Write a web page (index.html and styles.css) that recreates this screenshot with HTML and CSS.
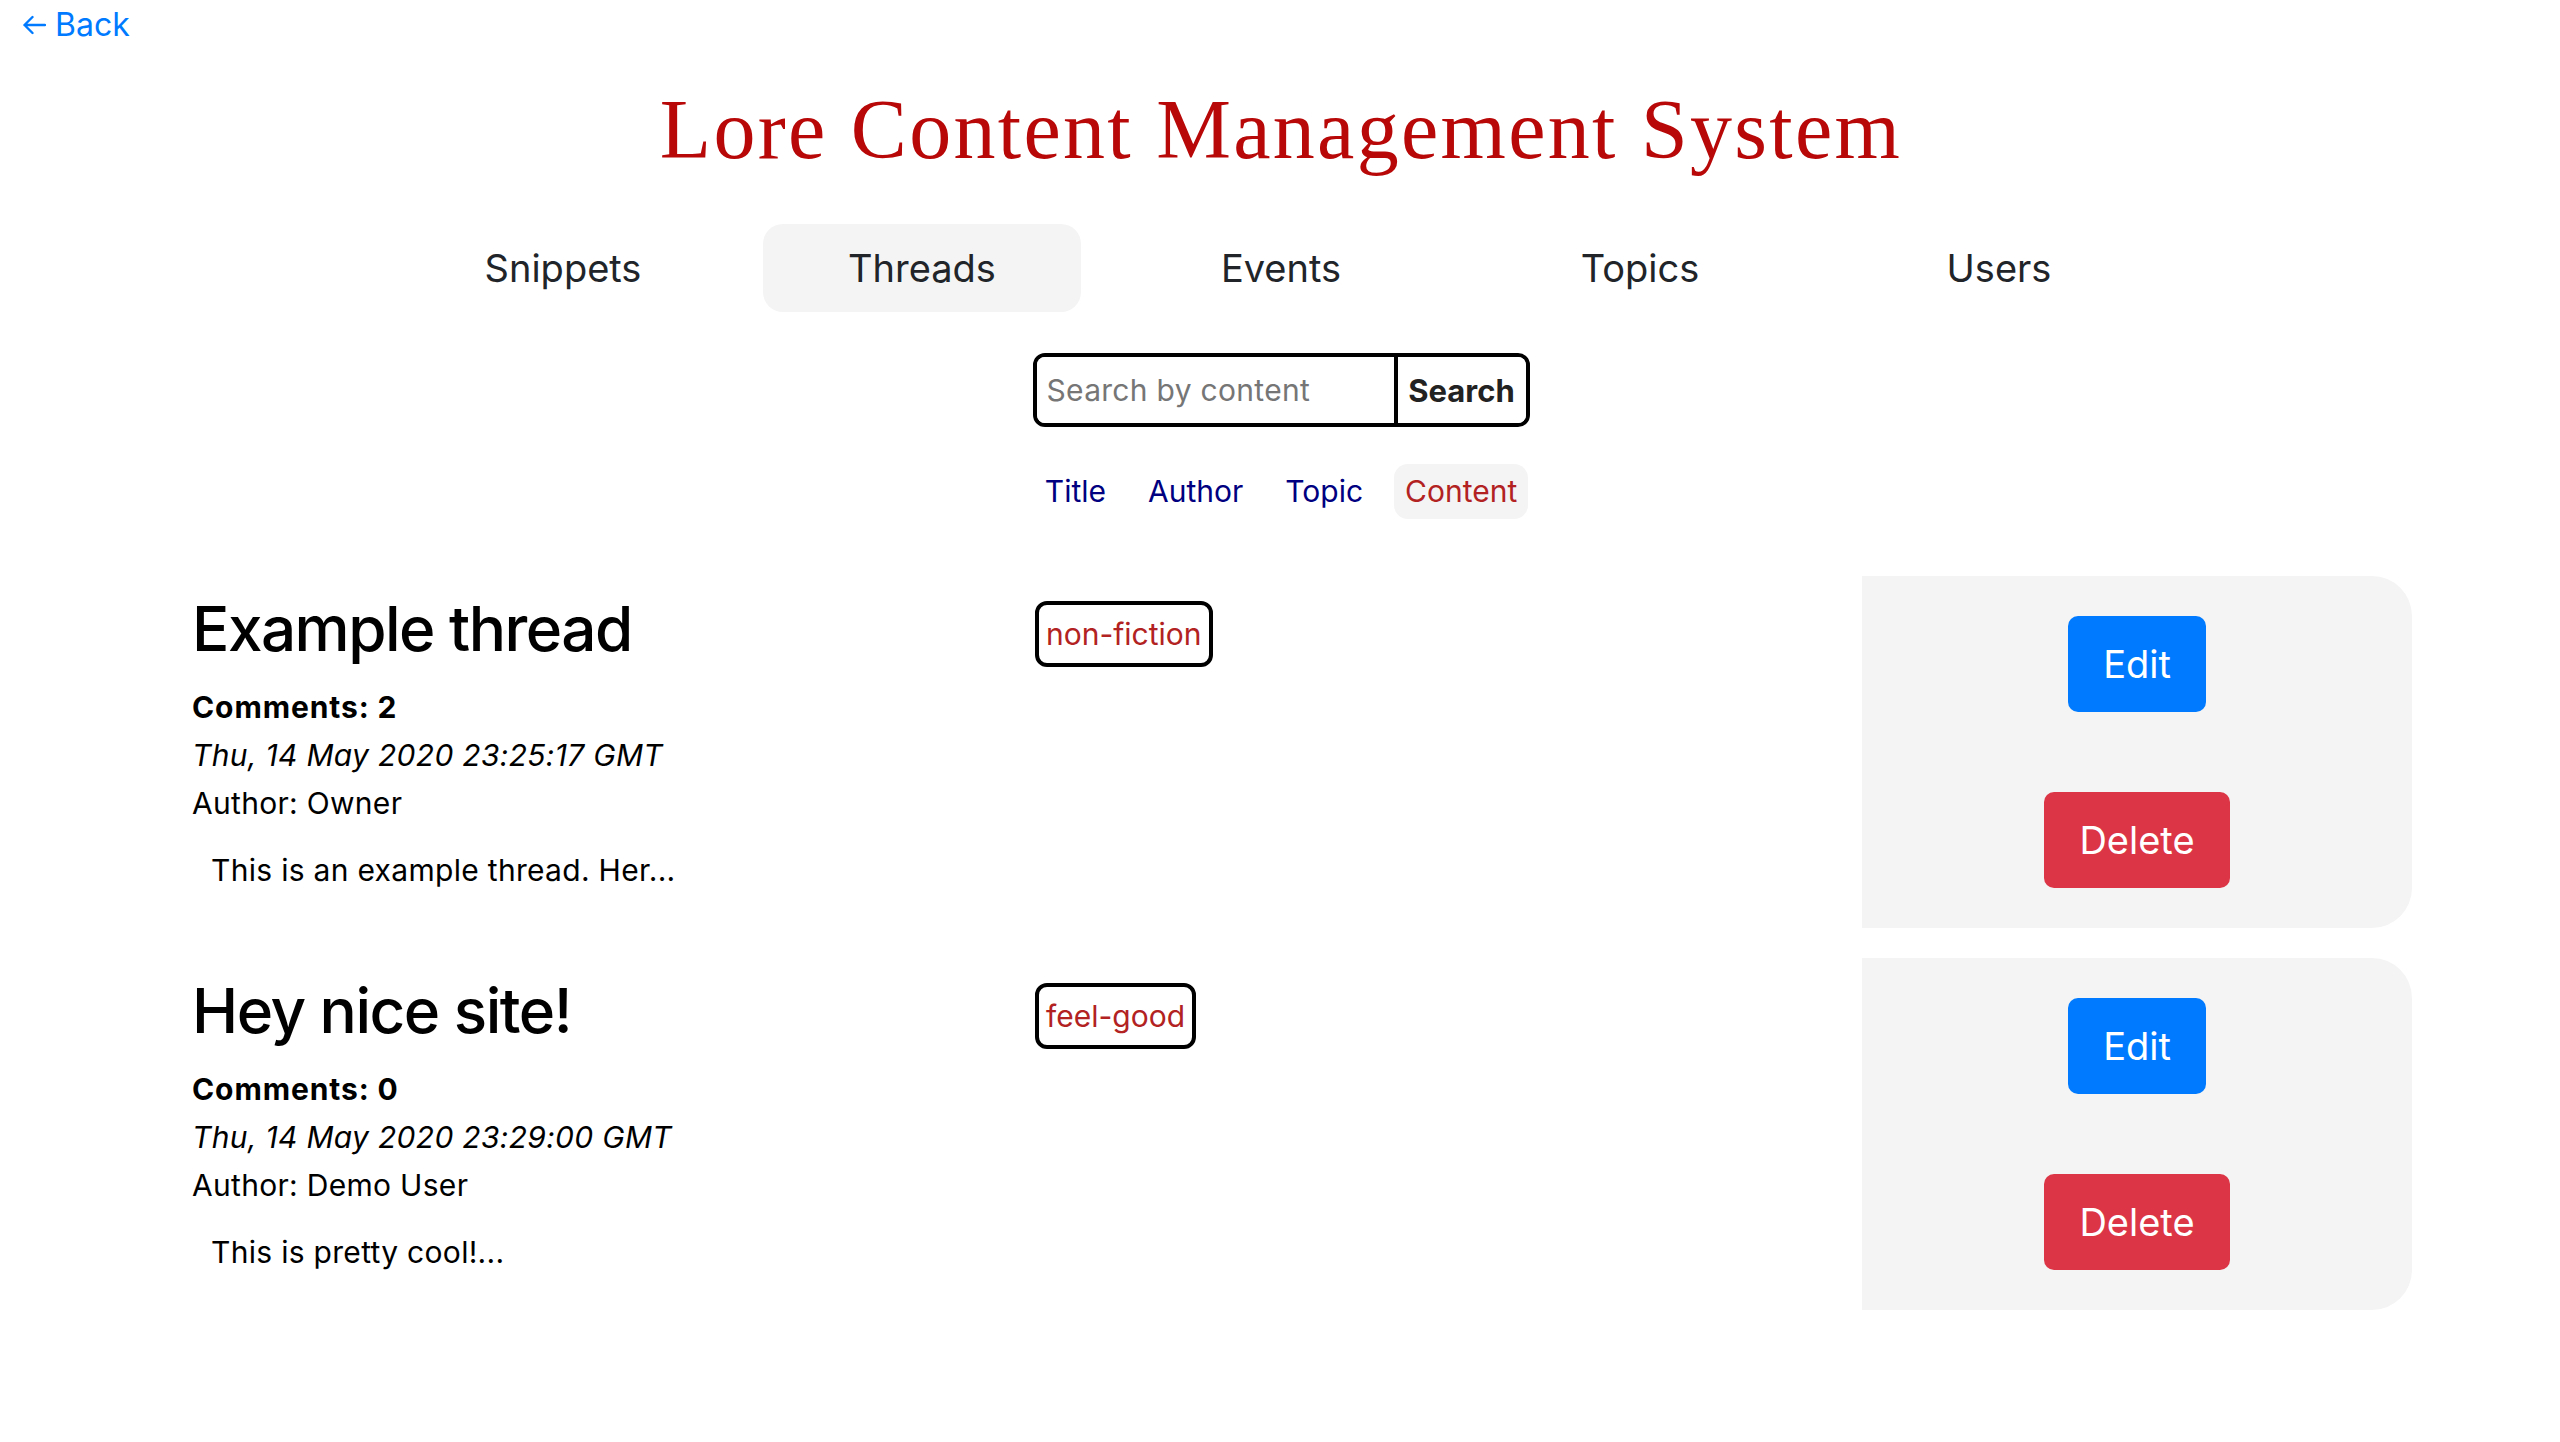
FILE: index.html
```html
<!DOCTYPE html>
<html lang="en">
<head>
<meta charset="utf-8">
<title>Lore Content Management System</title>
<link rel="stylesheet" href="styles.css">
</head>
<body>
<div class="topbar">
  <a class="back" href="#">
    <svg class="back-icon" width="24" height="20" viewBox="0 0 24 20" aria-hidden="true">
      <path d="M23 10H2.5M10.5 2L2.5 10L10.5 18" fill="none" stroke="currentColor" stroke-width="2.4" stroke-linecap="round" stroke-linejoin="round"/>
    </svg>
    <span>Back</span>
  </a>
</div>
<header class="masthead">
  <h1 class="site-title">Lore Content Management System</h1>
  <nav class="main-nav">
    <a class="nav-item" href="#">Snippets</a>
    <a class="nav-item active" href="#">Threads</a>
    <a class="nav-item" href="#">Events</a>
    <a class="nav-item" href="#">Topics</a>
    <a class="nav-item" href="#">Users</a>
  </nav>
  <form class="search">
    <input class="search-input" type="text" placeholder="Search by content">
    <button class="search-btn" type="button">Search</button>
  </form>
  <div class="filters">
    <a class="filter" href="#">Title</a>
    <a class="filter" href="#">Author</a>
    <a class="filter" href="#">Topic</a>
    <a class="filter active" href="#">Content</a>
  </div>
</header>
<main class="threads">
  <article class="thread">
    <div class="thread-info">
      <h2 class="thread-title">Example thread</h2>
      <p class="comments">Comments: 2</p>
      <p class="date">Thu, 14 May 2020 23:25:17 GMT</p>
      <p class="author">Author: Owner</p>
      <p class="excerpt">This is an example thread. Her...</p>
    </div>
    <div class="thread-tags"><span class="tag">non-fiction</span></div>
    <div class="thread-actions">
      <button class="btn btn-edit" type="button">Edit</button>
      <button class="btn btn-delete" type="button">Delete</button>
    </div>
  </article>
  <article class="thread">
    <div class="thread-info">
      <h2 class="thread-title">Hey nice site!</h2>
      <p class="comments">Comments: 0</p>
      <p class="date">Thu, 14 May 2020 23:29:00 GMT</p>
      <p class="author">Author: Demo User</p>
      <p class="excerpt">This is pretty cool!...</p>
    </div>
    <div class="thread-tags"><span class="tag">feel-good</span></div>
    <div class="thread-actions">
      <button class="btn btn-edit" type="button">Edit</button>
      <button class="btn btn-delete" type="button">Delete</button>
    </div>
  </article>
</main>
</body>
</html>
```

FILE: styles.css
```css
* { box-sizing: border-box; }

html, body {
  margin: 0;
  padding: 0;
  background: #fff;
}

body {
  font-family: Inter, "Noto Sans", "Liberation Sans", sans-serif;
  color: #000;
}

.topbar {
  padding: 5px 0 0 22px;
  height: 44px;
}

.back {
  display: inline-flex;
  align-items: center;
  gap: 9px;
  color: #007bff;
  text-decoration: none;
  font-size: 32px;
  line-height: 39px;
}

.back-icon { display: block; }

.masthead {
  padding-left: 2px;
}

.site-title {
  margin: 35px 0 0;
  text-align: center;
  font-family: "Liberation Serif", "Times New Roman", serif;
  font-weight: 400;
  font-size: 84px;
  line-height: 101px;
  color: #b80808;
  letter-spacing: 2.3px;
}

.main-nav {
  margin-top: 44px;
  display: flex;
  justify-content: center;
  gap: 41px;
}

.nav-item {
  width: 318px;
  height: 88px;
  display: flex;
  align-items: center;
  justify-content: center;
  border-radius: 20px;
  color: #212529;
  text-decoration: none;
  font-size: 38px;
}

.nav-item.active { background: #f4f4f4; }

.search {
  margin: 41px auto 0;
  width: 497px;
  height: 74px;
  display: flex;
  border: 4px solid #000;
  border-radius: 12px;
  overflow: hidden;
}

.search-input {
  flex: 1;
  min-width: 0;
  border: none;
  outline: none;
  padding: 0 10px;
  font-family: inherit;
  font-size: 30px;
  letter-spacing: 0.3px;
  color: #000;
  background: #fff;
}

.search-input::placeholder { color: #767676; }

.search-btn {
  width: 132px;
  border: none;
  border-left: 4px solid #000;
  background: #fff;
  font-family: inherit;
  font-weight: 700;
  font-size: 31px;
  color: #222;
  padding: 0;
}

.filters {
  margin-top: 37px;
  display: flex;
  justify-content: center;
  gap: 20px;
}

.filter {
  height: 55px;
  line-height: 55px;
  padding: 0 11px;
  border-radius: 14px;
  font-size: 30px;
  color: #000080;
  text-decoration: none;
}

.filter.active {
  background: #f4f4f4;
  color: #b22222;
}

.threads {
  margin-top: 57px;
  padding-left: 192px;
  display: flex;
  flex-direction: column;
  gap: 30px;
}

.thread {
  display: grid;
  grid-template-columns: 843px 827px 550px;
}

.thread-info { padding-top: 16px; }

.thread-title {
  margin: 0;
  font-size: 62px;
  line-height: 74px;
  font-weight: 500;
  letter-spacing: -1.5px;
}

.thread-info p {
  margin: 0;
  font-size: 30px;
  line-height: 48px;
  letter-spacing: 0.3px;
}

.thread-info .comments {
  margin-top: 17px;
  font-weight: 700;
  letter-spacing: 0.9px;
}

.thread-info .date { font-style: italic; }

.thread-info .excerpt {
  margin-top: 19px;
  padding-left: 19px;
}

.thread-tags { padding-top: 25px; }

.tag {
  display: inline-block;
  border: 4px solid #000;
  border-radius: 12px;
  padding: 6px 7px;
  line-height: 46px;
  font-size: 30px;
  color: #b22222;
}

.thread-actions {
  background: #f4f4f4;
  border-radius: 0 40px 40px 0;
  padding: 40px 0;
  display: flex;
  flex-direction: column;
  align-items: center;
  gap: 80px;
}

.btn {
  height: 96px;
  padding: 0 35px;
  border: none;
  border-radius: 10px;
  font-family: inherit;
  font-size: 38px;
  color: #fff;
}

.btn-edit { background: #007bff; }
.btn-delete { background: #dc3545; }
```
